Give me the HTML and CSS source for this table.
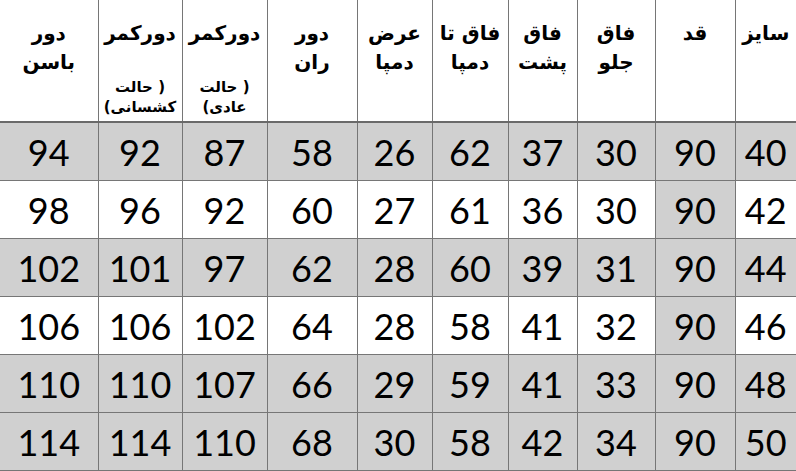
FILE: index.html
```html
<!DOCTYPE html>
<html lang="fa" dir="rtl">
<head>
<meta charset="utf-8">
<link rel="stylesheet" href="styles.css">
</head>
<body>
<table class="size-table">
  <colgroup>
    <col class="c1"><col class="c2"><col class="c3"><col class="c4"><col class="c5">
    <col class="c6"><col class="c7"><col class="c8"><col class="c9"><col class="c10">
  </colgroup>
  <thead>
    <tr>
      <th><div class="h">سایز</div></th>
      <th><div class="h">قد</div></th>
      <th><div class="h">فاق<br>جلو</div></th>
      <th><div class="h">فاق<br>پشت</div></th>
      <th><div class="h">فاق تا<br>دمپا</div></th>
      <th><div class="h">عرض<br>دمپا</div></th>
      <th><div class="h">دور<br>ران</div></th>
      <th><div class="h">دورکمر</div><div class="sub">حالت )<br>(عادی</div></th>
      <th><div class="h">دورکمر</div><div class="sub">حالت )<br>(کشسانی</div></th>
      <th><div class="h">دور<br>باسن</div></th>
    </tr>
  </thead>
  <tbody>
    <tr class="shade"><td>40</td><td class="q">90</td><td>30</td><td>37</td><td>62</td><td>26</td><td>58</td><td>87</td><td>92</td><td>94</td></tr>
    <tr><td>42</td><td class="q">90</td><td>30</td><td>36</td><td>61</td><td>27</td><td>60</td><td>92</td><td>96</td><td>98</td></tr>
    <tr class="shade"><td>44</td><td class="q">90</td><td>31</td><td>39</td><td>60</td><td>28</td><td>62</td><td>97</td><td>101</td><td>102</td></tr>
    <tr><td>46</td><td class="q">90</td><td>32</td><td>41</td><td>58</td><td>28</td><td>64</td><td>102</td><td>106</td><td>106</td></tr>
    <tr class="shade"><td>48</td><td class="q">90</td><td>33</td><td>41</td><td>59</td><td>29</td><td>66</td><td>107</td><td>110</td><td>110</td></tr>
    <tr class="shade"><td>50</td><td class="q">90</td><td>34</td><td>42</td><td>58</td><td>30</td><td>68</td><td>110</td><td>114</td><td>114</td></tr>
  </tbody>
</table>
</body>
</html>
```

FILE: styles.css
```css
html, body {
  margin: 0;
  padding: 0;
  background: #ffffff;
}

.size-table {
  width: 796px;
  border-collapse: collapse;
  table-layout: fixed;
  direction: rtl;
}

.c1 { width: 61px; }
.c2 { width: 80px; }
.c3 { width: 78px; }
.c4 { width: 69px; }
.c5 { width: 76px; }
.c6 { width: 75px; }
.c7 { width: 90px; }
.c8 { width: 85px; }
.c9 { width: 84px; }
.c10 { width: 98px; }

.size-table th,
.size-table td {
  border: 1px solid #767676;
  padding: 0;
  text-align: center;
  color: #000;
}

.size-table tr > :first-child { border-right: none; }
.size-table tr > :last-child { border-left: none; }
.size-table thead th { border-top: none; }

.size-table th {
  height: 121px;
  vertical-align: top;
  border-bottom: 2px solid #6a6a6a;
  font-family: "DejaVu Sans", sans-serif;
  font-weight: bold;
}

.h {
  font-size: 20px;
  line-height: 29px;
  padding-top: 19px;
}

.sub {
  direction: ltr;
  unicode-bidi: isolate;
  font-size: 15px;
  line-height: 20px;
  margin-top: 29px;
}

.size-table td {
  height: 57px;
  font-family: Lato, "Open Sans", sans-serif;
  font-size: 36px;
  line-height: 1;
  vertical-align: middle;
}

.shade td,
td.q {
  background: #d0d0d0;
}
```
